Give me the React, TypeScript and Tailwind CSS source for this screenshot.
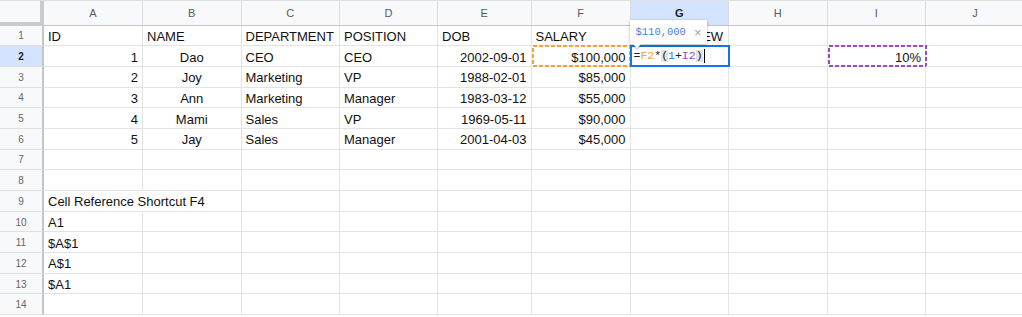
import React from "react";

const COLS = ["A", "B", "C", "D", "E", "F", "G", "H", "I", "J"];

// row 0 is the column header; rows 1..14 are sheet rows
const DATA: string[][] = [
  ["ID", "NAME", "DEPARTMENT", "POSITION", "DOB", "SALARY", "SALARY_NEW"],
  ["1", "Dao", "CEO", "CEO", "2002-09-01", "$100,000", "", "", "10%"],
  ["2", "Joy", "Marketing", "VP", "1988-02-01", "$85,000"],
  ["3", "Ann", "Marketing", "Manager", "1983-03-12", "$55,000"],
  ["4", "Mami", "Sales", "VP", "1969-05-11", "$90,000"],
  ["5", "Jay", "Sales", "Manager", "2001-04-03", "$45,000"],
  [],
  [],
  ["Cell Reference Shortcut F4"],
  ["A1"],
  ["$A$1"],
  ["A$1"],
  ["$A1"],
  [],
];

function align(row: number, col: number) {
  if (row === 1) return "justify-start";
  if (row >= 2 && row <= 6) {
    if (col === 1) return "justify-center";
    if (col === 0 || col === 4 || col === 5 || col === 8) return "justify-end";
  }
  return "justify-start";
}

function Dashed({ color }: { color: string }) {
  return (
    <svg className="absolute left-0 top-[-1px] pointer-events-none" width="100" height="23">
      <rect x="1" y="1" width="97" height="20" fill="none" stroke={color} strokeWidth="2" strokeDasharray="4 2" />
    </svg>
  );
}

function Editor() {
  return (
    <div className="absolute left-[-1px] top-[-1px] w-[100px] h-[22px] border-2 border-[#1a73e8] bg-white z-10 flex items-center pl-[2px]">
      <span className="font-['Liberation_Mono',monospace] text-[11.5px] leading-none text-[#222] flex items-center">
        <span>=</span>
        <span className="text-[#f29f38]">F2</span>
        <span>*</span>
        <span className="bg-[#e3e3e3]">(</span>
        <span className="text-[#3b78e7]">1</span>
        <span>+</span>
        <span className="text-[#9a44c8]">I2</span>
        <span className="bg-[#e3e3e3]">)</span>
        <span className="w-px h-[14px] bg-black ml-[1px]" />
      </span>
      {/* result preview tooltip */}
      <div className="absolute left-[-2px] bottom-[21px] w-[77px] h-[24px] bg-white shadow-[0_1px_3px_rgba(0,0,0,0.3)] flex items-center pl-[6px] gap-[8px]">
        <span className="font-['Liberation_Mono',monospace] text-[10.5px] text-[#4a80d9]">$110,000</span>
        <span className="text-[13px] text-[#a0a4a8] leading-none">×</span>
        <div className="absolute left-[4px] bottom-[-3px] w-[6px] h-[6px] bg-white rotate-45 shadow-[1px_1px_1px_rgba(0,0,0,0.2)]" />
      </div>
    </div>
  );
}

export default function App() {
  return (
    <div className="w-[1022px] h-[317px] overflow-hidden bg-white font-['Liberation_Sans',Arial,sans-serif] border-t border-[#e0e0e0]">
      <div className="grid grid-cols-[44px_99px_98.5px_98.5px_98px_93.5px_99px_98.5px_98.5px_98.5px_99px] grid-rows-[24.5px_repeat(14,20.7px)]">
        {/* corner */}
        <div className="bg-[#f8f9fa] border-r-4 border-b-4 border-[#c9cbcd]" />
        {COLS.map((c) => (
          <div
            key={c}
            className={`flex items-center justify-center pt-[1px] border-r border-b border-r-[#dadce0] border-b-[#c4c7c5] text-[11px] ${
              c === "G" ? "bg-[#d3e3fd] text-[#1f1f1f] font-bold" : "bg-[#f8f9fa] text-[#575a5e]"
            }`}
          >
            {c}
          </div>
        ))}

        {DATA.map((row, ri) => {
          const r = ri + 1;
          return (
            <React.Fragment key={r}>
              <div
                className={`flex items-center justify-center pt-[1px] border-b border-b-[#e0e0e0] border-r-2 border-r-[#c4c7c5] text-[10px] ${
                  r === 2 ? "bg-[#d3e3fd] text-[#1f1f1f] font-bold" : "bg-[#f8f9fa] text-[#666]"
                }`}
              >
                {r}
              </div>
              {COLS.map((_, ci) => {
                const text = row[ci] ?? "";
                const overflow = r === 9 && ci === 0;
                return (
                  <div
                    key={ci}
                    className={`relative flex items-center pt-[2px] px-[4px] border-b border-r border-[#e2e3e3] text-[13px] leading-none text-[#111] whitespace-nowrap ${align(r, ci)} ${
                      overflow ? "border-r-transparent" : ""
                    }`}
                  >
                    {text}
                    {r === 2 && ci === 5 && <Dashed color="#f6a13a" />}
                    {r === 2 && ci === 8 && <Dashed color="#9b47c6" />}
                    {r === 2 && ci === 6 && <Editor />}
                  </div>
                );
              })}
            </React.Fragment>
          );
        })}
      </div>
    </div>
  );
}
